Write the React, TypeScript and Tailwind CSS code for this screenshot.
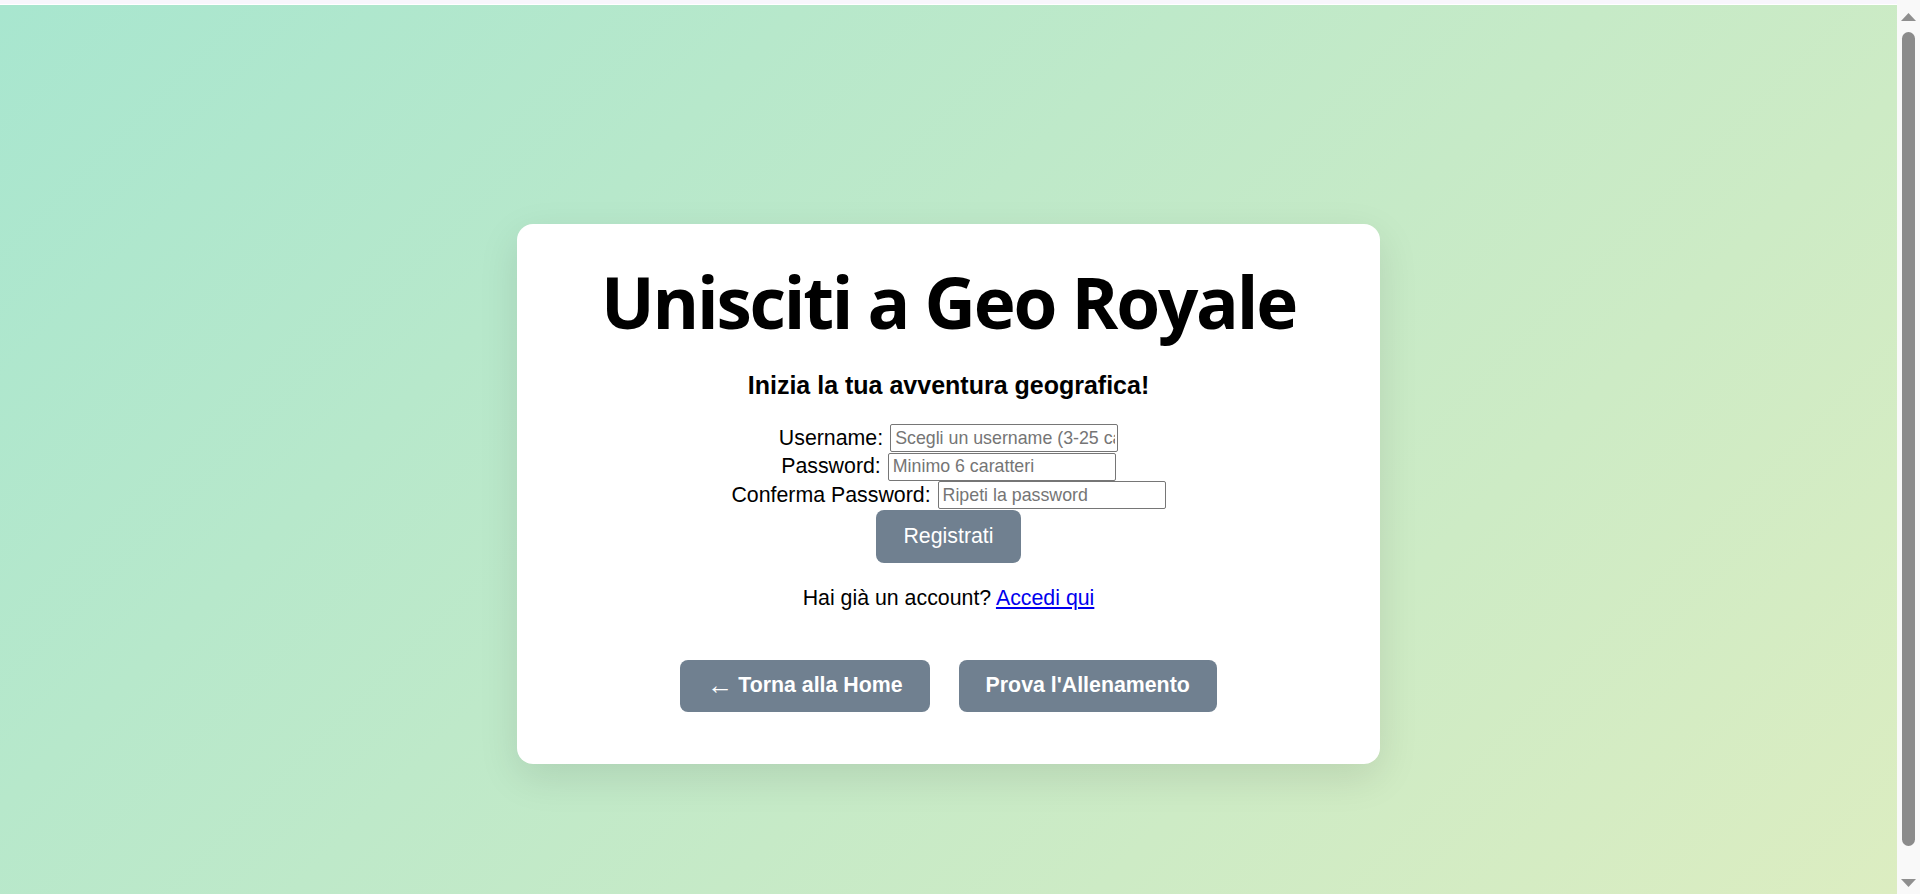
import React from "react";

const FIELDS = [
  { label: "Username:", type: "text", placeholder: "Scegli un username (3-25 caratteri)" },
  { label: "Password:", type: "password", placeholder: "Minimo 6 caratteri" },
  { label: "Conferma Password:", type: "password", placeholder: "Ripeti la password" },
];

const inputClass =
  "h-[28px] w-[228px] rounded-[2px] border border-[#767676] bg-white pl-[4px] pr-[2px] text-[17.8px] text-black outline-none placeholder:text-[#757575] font-['Liberation_Sans',Arial,sans-serif]";

const navButton =
  "flex h-[52px] items-center rounded-[8px] bg-[#708090] px-[27px] text-[21.33px] font-bold leading-[25px] text-white";

function ScrollbarRail() {
  return (
    <div className="flex w-[23px] shrink-0 flex-col items-center bg-[#f9f9f9] pt-[13px]">
      <svg width="15" height="8" viewBox="0 0 15 8">
        <path d="M7.5 0 L15 8 L0 8 Z" fill="#8f8f8f" />
      </svg>
      <div className="mt-[11px] h-[814px] w-[13px] rounded-full bg-[#8b8b8b]" />
      <svg width="15" height="8" viewBox="0 0 15 8" className="mt-[33px]">
        <path d="M0 0 L15 0 L7.5 8 Z" fill="#8f8f8f" />
      </svg>
    </div>
  );
}

export default function App() {
  return (
    <div className="flex h-screen overflow-hidden font-['Liberation_Sans',Arial,sans-serif] text-black">
      <div className="flex min-w-0 flex-1 flex-col">
        <div className="h-[5px] shrink-0 border-b border-white bg-[#f8f6fc]" />
        <main className="flex flex-1 justify-center bg-[linear-gradient(135deg,#a8e6cf,#dcedc1)] pt-[219px]">
          <div className="flex h-[540px] w-[863px] flex-col items-center rounded-[16px] bg-white pt-[42px] text-center shadow-[0_13px_40px_rgba(0,0,0,0.1)]">
            <h1 className="font-['Open_Sans',sans-serif] text-[71px] font-bold leading-[71px] tracking-[-2.2px]">
              Unisciti a Geo Royale
            </h1>
            <p className="mt-[34px] text-[25px] font-bold leading-[29px]">
              Inizia la tua avventura geografica!
            </p>
            <form className="mt-[24px] flex flex-col items-center" onSubmit={(e) => e.preventDefault()}>
              {FIELDS.map((f) => (
                <div key={f.label} className="flex h-[28.5px] items-center justify-center gap-[7px]">
                  <label className="text-[21.33px] leading-[25px]">{f.label}</label>
                  <input type={f.type} placeholder={f.placeholder} className={inputClass} />
                </div>
              ))}
              <button
                type="submit"
                className="h-[53px] rounded-[8px] bg-[#708090] px-[27px] text-[21.33px] leading-[25px] text-white"
              >
                Registrati
              </button>
            </form>
            <p className="mt-[23px] text-[21.33px] leading-[25px]">
              Hai già un account?{" "}
              <a href="#" className="text-[#0000ee] underline">
                Accedi qui
              </a>
            </p>
            <div className="mt-[49px] flex gap-[29px]">
              <button className={navButton}>
                <span className="mr-[5px] text-[26px] font-normal">←</span>
                Torna alla Home
              </button>
              <button className={navButton}>Prova l'Allenamento</button>
            </div>
          </div>
        </main>
      </div>
      <ScrollbarRail />
    </div>
  );
}
